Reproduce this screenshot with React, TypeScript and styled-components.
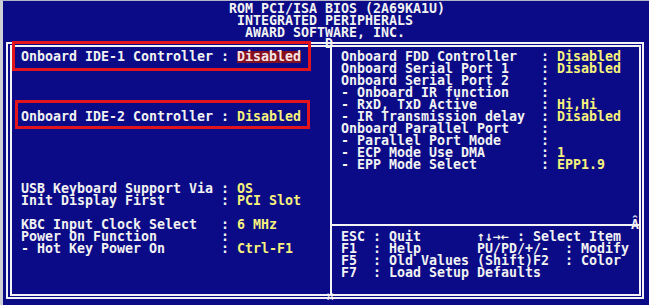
import styled, { createGlobalStyle } from 'styled-components'

const GlobalStyle = createGlobalStyle`
  html, body {
    margin: 0;
    padding: 0;
    background: #0b0b87;
  }
`

const leftItems = [
  { label: 'Onboard IDE-1 Controller', value: 'Disabled', skip: 0, selected: true, box: { top: -10, left: -9, width: 299, height: 30 } },
  { label: 'Onboard IDE-2 Controller', value: 'Disabled', skip: 4, box: { top: -11, left: -6, width: 295, height: 29 } },
  { label: 'USB Keyboard Support Via', value: 'OS', skip: 5 },
  { label: 'Init Display First', value: 'PCI Slot', skip: 0 },
  { label: 'KBC Input Clock Select', value: '6 MHz', skip: 1 },
  { label: 'Power On Function', value: '', skip: 0 },
  { label: '- Hot Key Power On', value: 'Ctrl-F1', skip: 0 },
]

const rightItems = [
  { label: 'Onboard FDD Controller', value: 'Disabled' },
  { label: 'Onboard Serial Port 1', value: 'Disabled' },
  { label: 'Onboard Serial Port 2', value: '' },
  { label: '- Onboard IR function', value: '' },
  { label: '- RxD, TxD Active', value: 'Hi,Hi' },
  { label: '- IR Transmission delay', value: 'Disabled' },
  { label: 'Onboard Parallel Port', value: '' },
  { label: '- Parallel Port Mode', value: '' },
  { label: '- ECP Mode Use DMA', value: '1' },
  { label: '- EPP Mode Select', value: 'EPP1.9' },
]

const helpItems = [
  { key: 'ESC', action: 'Quit', extra: '↑↓→← : Select Item' },
  { key: 'F1', action: 'Help', extra: 'PU/PD/+/-  : Modify' },
  { key: 'F5', action: 'Old Values', extra: '(Shift)F2  : Color' },
  { key: 'F7', action: 'Load Setup Defaults', extra: '' },
]

export default function App() {
  return (
    <>
      <GlobalStyle />
      <Screen>
        <Header>
          <HeaderLine $col={28}>ROM PCI/ISA BIOS (2A69KA1U)</HeaderLine>
          <HeaderLine $col={29}>INTEGRATED PERIPHERALS</HeaderLine>
          <HeaderLine $col={30}>AWARD SOFTWARE, INC.</HeaderLine>
        </Header>
        <Frame>
          <InnerFrame>
            <LeftPane>
              {leftItems.map((item) => (
                <Row key={item.label} $skip={item.skip}>
                  <Label>{item.label}</Label>
                  <Colon>:</Colon>
                  <Value $selected={item.selected}>{item.value}</Value>
                  {item.box && (
                    <Callout
                      $top={item.box.top}
                      $left={item.box.left}
                      $width={item.box.width}
                      $height={item.box.height}
                    />
                  )}
                </Row>
              ))}
            </LeftPane>
            <RightPane>
              <Settings>
                {rightItems.map((item) => (
                  <Row key={item.label}>
                    <Label>{item.label}</Label>
                    <Colon>:</Colon>
                    <Value>{item.value}</Value>
                  </Row>
                ))}
              </Settings>
              <Help>
                {helpItems.map((h) => (
                  <HelpRow key={h.key}>
                    <span>{h.key}</span>
                    <span>:</span>
                    <HelpAction $wide={!h.extra}>{h.action}</HelpAction>
                    {h.extra && <span>{h.extra}</span>}
                  </HelpRow>
                ))}
                <Junction $left={299} $top={-7}>Â</Junction>
              </Help>
            </RightPane>
          </InnerFrame>
          <Junction $left={317} $top={-6}>D</Junction>
          <Junction $left={318} $top={247}>¤</Junction>
        </Frame>
      </Screen>
    </>
  )
}

const Screen = styled.div`
  width: 649px;
  height: 305px;
  box-sizing: border-box;
  background: #0b0b87;
  border-left: 3px solid #cfd0d6;
  border-top: 1px solid #b4b4c8;
  padding: 2px 0 0 2px;
  overflow: hidden;
  font-family: "DejaVu Sans Mono", "Liberation Mono", monospace;
  font-weight: bold;
  font-size: 13.29px;
  line-height: 12px;
  color: #f2f2f2;
`

const Header = styled.header`
  height: 36px;
`

const HeaderLine = styled.div<{ $col: number }>`
  height: 12px;
  padding-left: ${(p) => p.$col * 8}px;
  white-space: pre;
`

const Frame = styled.div`
  position: relative;
  box-sizing: border-box;
  width: 638px;
  height: 257px;
  margin: 3px 0 0 1px;
  border: 2px solid #f4f4f4;
  padding: 1px 1px 1px 2px;
`

const InnerFrame = styled.div`
  box-sizing: border-box;
  height: 100%;
  border: 2px solid #f4f4f4;
  display: flex;
`

const LeftPane = styled.div`
  box-sizing: border-box;
  width: 320px;
  border-right: 2px solid #f4f4f4;
  padding: 4px 0 0 9px;
`

const RightPane = styled.div`
  flex: 1;
  display: flex;
  flex-direction: column;
`

const Settings = styled.div`
  box-sizing: border-box;
  height: 177px;
  padding: 4px 0 0 9px;
`

const Row = styled.div<{ $skip?: number }>`
  position: relative;
  display: grid;
  grid-template-columns: 200px 16px auto;
  height: 12px;
  margin-top: ${(p) => (p.$skip ?? 0) * 12}px;
  white-space: pre;
`

const Label = styled.span`
  color: #f2f2f2;
`

const Colon = styled.span`
  color: #f2f2f2;
`

const Value = styled.span<{ $selected?: boolean }>`
  justify-self: start;
  color: ${(p) => (p.$selected ? '#f8e4e4' : '#f7f27c')};
  background: ${(p) => (p.$selected ? '#860f1f' : 'transparent')};
`

const Callout = styled.div<{ $top: number; $left: number; $width: number; $height: number }>`
  position: absolute;
  top: ${(p) => p.$top}px;
  left: ${(p) => p.$left}px;
  width: ${(p) => p.$width}px;
  height: ${(p) => p.$height}px;
  box-sizing: border-box;
  border: 3px solid #e2151d;
  pointer-events: none;
`

const Help = styled.div`
  position: relative;
  flex: 1;
  border-top: 2px solid #f4f4f4;
  padding: 5px 0 0 9px;
`

const HelpRow = styled.div`
  display: grid;
  grid-template-columns: 32px 16px 88px auto;
  height: 12px;
  white-space: pre;
`

const HelpAction = styled.span<{ $wide?: boolean }>`
  grid-column: ${(p) => (p.$wide ? '3 / span 2' : 'auto')};
`

const Junction = styled.span<{ $left: number; $top: number }>`
  position: absolute;
  left: ${(p) => p.$left}px;
  top: ${(p) => p.$top}px;
  height: 12px;
  color: #f4f4f4;
`
